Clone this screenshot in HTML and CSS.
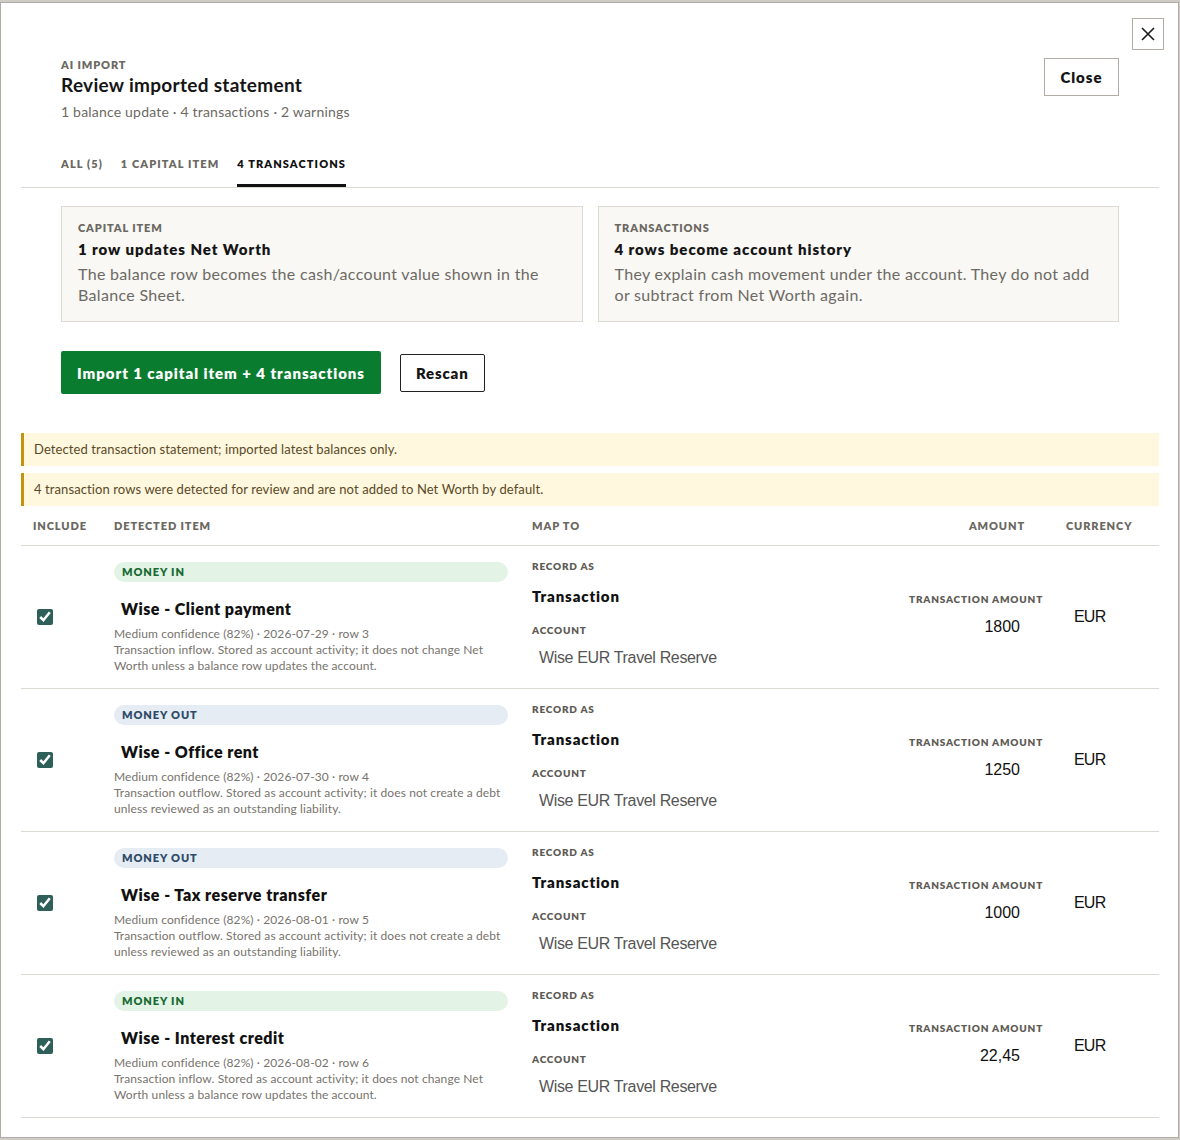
FILE: index.html
```html
<!DOCTYPE html>
<html>
	<head>
		<meta charset="utf-8">
		<title>Review imported statement</title>
		<link rel="stylesheet" href="styles.css">
	</head>
	<body>
		<div class="modal">
			<button class="x-btn" aria-label="Close">
				<svg width="14" height="14" viewBox="0 0 14 14"><path d="M1 1 L13 13 M13 1 L1 13" stroke="#1a1a1a" stroke-width="1.6" fill="none"/></svg>
			</button>
			<div class="head">
				<div>
					<div class="eyebrow">AI IMPORT</div>
					<h1 class="title">Review imported statement</h1>
					<div class="sub">1 balance update · 4 transactions · 2 warnings</div>
				</div>
				<button class="btn-close">Close</button>
			</div>
			<div class="tabs">
				<span class="tab">ALL (5)</span>
				<span class="tab">1 CAPITAL ITEM</span>
				<span class="tab active">4 TRANSACTIONS</span>
			</div>
			<div class="cards">
				<div class="card">
					<div class="eyebrow">CAPITAL ITEM</div>
					<div class="card-h">1 row updates Net Worth</div>
					<p class="card-t">The balance row becomes the cash/account value shown in the Balance Sheet.</p>
				</div>
				<div class="card">
					<div class="eyebrow">TRANSACTIONS</div>
					<div class="card-h">4 rows become account history</div>
					<p class="card-t">They explain cash movement under the account. They do not add or subtract from Net Worth again.</p>
				</div>
			</div>
			<div class="actions">
				<button class="btn-import">Import 1 capital item + 4 transactions</button>
				<button class="btn-rescan">Rescan</button>
			</div>
			<div class="warn">Detected transaction statement; imported latest balances only.</div>
			<div class="warn">4 transaction rows were detected for review and are not added to Net Worth by default.</div>

			<div class="grid thead">
				<div class="th">INCLUDE</div>
				<div class="th">DETECTED ITEM</div>
				<div class="th">MAP TO</div>
				<div class="th th-amt">AMOUNT</div>
				<div class="th">CURRENCY</div>
			</div>

			<div class="grid row">
				<div class="c-inc"><input type="checkbox" checked></div>
				<div class="c-item">
					<div class="badge in">MONEY IN</div>
					<div class="item-name">Wise - Client payment</div>
					<div class="meta">Medium confidence (82%) · 2026-07-29 · row 3</div>
					<div class="meta">Transaction inflow. Stored as account activity; it does not change Net Worth unless a balance row updates the account.</div>
				</div>
				<div class="c-map">
					<div class="lbl">RECORD AS</div>
					<div class="rec">Transaction</div>
					<div class="lbl lbl-acc">ACCOUNT</div>
					<div class="acc">Wise EUR Travel Reserve</div>
				</div>
				<div class="c-amt">
					<div class="lbl">TRANSACTION AMOUNT</div>
					<div class="amt">1800</div>
				</div>
				<div class="c-cur">EUR</div>
			</div>

			<div class="grid row">
				<div class="c-inc"><input type="checkbox" checked></div>
				<div class="c-item">
					<div class="badge out">MONEY OUT</div>
					<div class="item-name">Wise - Office rent</div>
					<div class="meta">Medium confidence (82%) · 2026-07-30 · row 4</div>
					<div class="meta">Transaction outflow. Stored as account activity; it does not create a debt unless reviewed as an outstanding liability.</div>
				</div>
				<div class="c-map">
					<div class="lbl">RECORD AS</div>
					<div class="rec">Transaction</div>
					<div class="lbl lbl-acc">ACCOUNT</div>
					<div class="acc">Wise EUR Travel Reserve</div>
				</div>
				<div class="c-amt">
					<div class="lbl">TRANSACTION AMOUNT</div>
					<div class="amt">1250</div>
				</div>
				<div class="c-cur">EUR</div>
			</div>

			<div class="grid row">
				<div class="c-inc"><input type="checkbox" checked></div>
				<div class="c-item">
					<div class="badge out">MONEY OUT</div>
					<div class="item-name">Wise - Tax reserve transfer</div>
					<div class="meta">Medium confidence (82%) · 2026-08-01 · row 5</div>
					<div class="meta">Transaction outflow. Stored as account activity; it does not create a debt unless reviewed as an outstanding liability.</div>
				</div>
				<div class="c-map">
					<div class="lbl">RECORD AS</div>
					<div class="rec">Transaction</div>
					<div class="lbl lbl-acc">ACCOUNT</div>
					<div class="acc">Wise EUR Travel Reserve</div>
				</div>
				<div class="c-amt">
					<div class="lbl">TRANSACTION AMOUNT</div>
					<div class="amt">1000</div>
				</div>
				<div class="c-cur">EUR</div>
			</div>

			<div class="grid row">
				<div class="c-inc"><input type="checkbox" checked></div>
				<div class="c-item">
					<div class="badge in">MONEY IN</div>
					<div class="item-name">Wise - Interest credit</div>
					<div class="meta">Medium confidence (82%) · 2026-08-02 · row 6</div>
					<div class="meta">Transaction inflow. Stored as account activity; it does not change Net Worth unless a balance row updates the account.</div>
				</div>
				<div class="c-map">
					<div class="lbl">RECORD AS</div>
					<div class="rec">Transaction</div>
					<div class="lbl lbl-acc">ACCOUNT</div>
					<div class="acc">Wise EUR Travel Reserve</div>
				</div>
				<div class="c-amt">
					<div class="lbl">TRANSACTION AMOUNT</div>
					<div class="amt">22,45</div>
				</div>
				<div class="c-cur">EUR</div>
			</div>
		</div>
	</body>
</html>
```

FILE: styles.css
```css
body {
	margin: 0;
	background: #cfccc5;
	font-family: Lato, "Noto Sans", sans-serif;
	letter-spacing: 0.02em;
	color: #1b1b1b;
}

.modal {
	position: relative;
	box-sizing: border-box;
	width: 1179px;
	height: 1136px;
	margin-top: 2px;
	padding: 0 19px 0 20px;
	background: #fff;
	border: 1px solid #b1ada5;
	overflow: hidden;
}

button {
	font-family: inherit;
	cursor: pointer;
}

.x-btn {
	position: absolute;
	top: 15px;
	right: 14px;
	width: 32px;
	height: 32px;
	padding: 0;
	background: #fff;
	border: 1px solid #b1ada5;
	display: flex;
	align-items: center;
	justify-content: center;
}

.head {
	display: flex;
	justify-content: space-between;
	align-items: flex-start;
	padding: 55px 40px 0 40px;
}

.eyebrow {
	font-size: 11px;
	line-height: 14px;
	font-weight: 800;
	letter-spacing: 0.08em;
	color: #6b6862;
}

.title {
	margin: 0;
	font-size: 19px;
	line-height: 26px;
	font-weight: 700;
	letter-spacing: 0.3px;
	color: #151515;
}

.sub {
	margin-top: 4px;
	font-size: 14px;
	line-height: 20px;
	letter-spacing: 0.2px;
	color: #6d6a64;
}

.btn-close {
	width: 75px;
	height: 38px;
	background: #fff;
	border: 1px solid #b1ada5;
	font-size: 15px;
	font-weight: 800;
	letter-spacing: 1px;
	color: #151515;
}

.tabs {
	display: flex;
	gap: 18px;
	margin-top: 35px;
	padding-left: 40px;
	border-bottom: 1px solid #dcd9d3;
}

.tab {
	font-size: 11px;
	line-height: 14px;
	font-weight: 800;
	letter-spacing: 0.1em;
	color: #6b6862;
	padding-bottom: 13px;
	border-bottom: 3px solid transparent;
}

.tab.active {
	color: #111;
	border-bottom-color: #111;
}

.cards {
	display: grid;
	grid-template-columns: 1fr 1fr;
	gap: 15px;
	margin-top: 18px;
	padding: 0 40px;
}

.card {
	background: #f9f8f5;
	border: 1px solid #dcd9d3;
	padding: 14px 16px 16px 16px;
}

.card-h {
	margin-top: 4px;
	font-size: 15px;
	line-height: 20px;
	font-weight: 800;
	letter-spacing: 0.95px;
	color: #151515;
}

.card-t {
	margin: 4px 0 0 0;
	font-size: 16px;
	line-height: 21px;
	color: #6d6a64;
}

.actions {
	display: flex;
	align-items: center;
	gap: 19px;
	margin-top: 29px;
	padding-left: 40px;
}

.btn-import {
	height: 43px;
	padding: 0 16px;
	background: #0a7c30;
	color: #fff;
	border: 0;
	border-radius: 2px;
	font-size: 15px;
	font-weight: 800;
	letter-spacing: 0.95px;
}

.btn-rescan {
	height: 38px;
	padding: 0 15px;
	background: #fff;
	color: #151515;
	border: 1px solid #222;
	border-radius: 2px;
	font-size: 15px;
	font-weight: 800;
	letter-spacing: 0.8px;
}

.warn {
	margin-top: 7px;
	padding: 8px 10px;
	font-size: 13px;
	line-height: 17px;
	letter-spacing: 0.1px;
	color: #5a4926;
	background: #fff7de;
	border-left: 3px solid #c6940c;
}

.actions + .warn {
	margin-top: 39px;
}

.grid {
	display: grid;
	grid-template-columns: 81px 418px 377px 157px 105px;
	border-bottom: 1px solid #dcd9d3;
}

.th {
	padding: 13px 12px 12px 12px;
	font-size: 11px;
	line-height: 14px;
	font-weight: 800;
	letter-spacing: 0.08em;
	color: #6b6862;
}

.th-amt {
	text-align: right;
	padding-right: 29px;
}

.row {
	height: 142px;
}

.c-inc {
	display: flex;
	align-items: center;
	padding-left: 16px;
}

.c-inc input {
	width: 16px;
	height: 16px;
	margin: 0;
	accent-color: #2e5f59;
}

.c-item {
	padding: 16px 12px 0 12px;
}

.badge {
	height: 20px;
	line-height: 20px;
	padding-left: 8px;
	border-radius: 10px;
	font-size: 11px;
	font-weight: 800;
	letter-spacing: 0.08em;
}

.badge.in {
	background: #e3f4e7;
	color: #176a31;
}

.badge.out {
	background: #e5ecf3;
	color: #2d4a68;
}

.item-name {
	margin-top: 13px;
	padding-left: 7px;
	font-size: 16px;
	line-height: 28px;
	font-weight: 800;
	letter-spacing: 0.5px;
	color: #111;
}

.meta {
	font-size: 12px;
	line-height: 16px;
	letter-spacing: 0.1px;
	color: #77736d;
}

.item-name + .meta {
	margin-top: 3px;
}

.c-map {
	padding: 14px 12px 0 12px;
}

.lbl {
	font-size: 10px;
	line-height: 12px;
	font-weight: 800;
	letter-spacing: 0.08em;
	white-space: nowrap;
	color: #5e5b55;
}

.rec {
	margin-top: 14px;
	font-size: 15px;
	line-height: 20px;
	font-weight: 800;
	letter-spacing: 0.85px;
	color: #111;
}

.lbl-acc {
	margin-top: 18px;
}

.acc {
	margin-top: 6px;
	padding-left: 7px;
	font-family: "Liberation Sans", Arial, sans-serif;
	font-size: 16px;
	line-height: 32px;
	letter-spacing: -0.35px;
	color: #555;
}

.c-amt {
	align-self: center;
	padding: 0 12px;
}

.amt {
	margin-top: 8px;
	padding-right: 22px;
	text-align: right;
	font-family: "Liberation Sans", Arial, sans-serif;
	font-size: 16px;
	line-height: 28px;
	letter-spacing: 0;
	color: #111;
}

.c-cur {
	align-self: center;
	padding-left: 20px;
	font-family: "Liberation Sans", Arial, sans-serif;
	font-size: 16px;
	letter-spacing: -0.8px;
	color: #111;
}
```
